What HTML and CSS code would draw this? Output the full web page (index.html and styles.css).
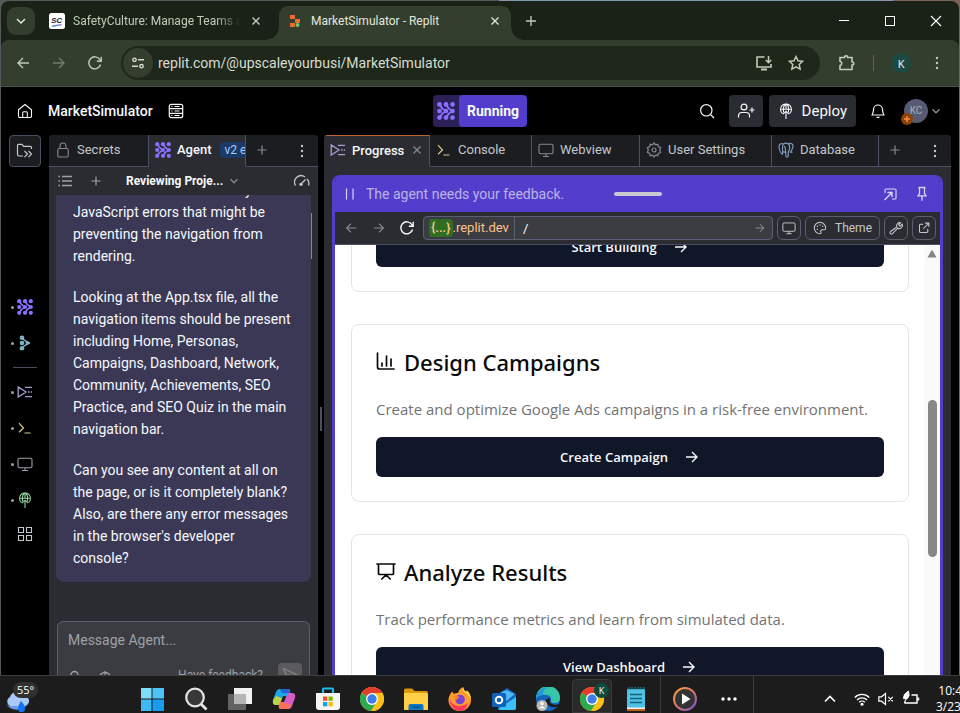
FILE: index.html
```html
<!DOCTYPE html>
<html lang="en">
<head>
<meta charset="utf-8">
<title>MarketSimulator - Replit</title>
<link rel="stylesheet" href="styles.css">
</head>
<body>
<svg class="defs" aria-hidden="true">
  <symbol id="agent" viewBox="0 0 16 16"><g fill="currentColor"><circle cx="2.2" cy="2.2" r="2.100"/><circle cx="8" cy="2.2" r="2.100"/><circle cx="13.8" cy="2.2" r="2.100"/><circle cx="2.2" cy="8" r="2.100"/><circle cx="8" cy="8" r="2.100"/><circle cx="13.8" cy="8" r="2.100"/><circle cx="2.2" cy="13.8" r="2.100"/><circle cx="8" cy="13.8" r="2.100"/><circle cx="13.8" cy="13.8" r="2.100"/></g><path d="M2.200 2.200Q4 6 8 8Q4 10 2.200 13.800M8 2.200Q9.800 6 13.800 8Q9.800 10 8 13.800" fill="none" stroke="currentColor" stroke-width="1.700"/></symbol>
  <symbol id="plus" viewBox="0 0 16 16"><path d="M8 3.500v9M3.500 8h9" fill="none" stroke="currentColor" stroke-width="1.200"/></symbol>
  <symbol id="dots" viewBox="0 0 16 16"><g fill="currentColor"><circle cx="8" cy="3" r="1.200"/><circle cx="8" cy="8" r="1.200"/><circle cx="8" cy="13" r="1.200"/></g></symbol>
  <symbol id="close" viewBox="0 0 16 16"><path d="M4 4l8 8M12 4l-8 8" fill="none" stroke="currentColor" stroke-width="1.500"/></symbol>
  <symbol id="down" viewBox="0 0 16 16"><path d="M4 6l4 4 4-4" fill="none" stroke="currentColor" stroke-width="1.500"/></symbol>
  <symbol id="left" viewBox="0 0 16 16"><path d="M14 8H3M8 3L3 8l5 5" fill="none" stroke="currentColor" stroke-width="1.400"/></symbol>
  <symbol id="right" viewBox="0 0 16 16"><path d="M2 8h11M8 3l5 5-5 5" fill="none" stroke="currentColor" stroke-width="1.400"/></symbol>
  <symbol id="reload" viewBox="0 0 16 16"><path d="M13.600 9.500A6 6 0 1 1 12.900 4.600L14 6M14.200 1.800V6.200H9.800" fill="none" stroke="currentColor" stroke-width="1.400"/></symbol>
  <symbol id="monitor" viewBox="0 0 16 16"><rect x="1" y="2.200" width="14" height="9.600" rx="1.500" fill="none" stroke="currentColor" stroke-width="1.100"/><path d="M8 12v2.400M5 14.500h6" stroke="currentColor" stroke-width="1.100"/></symbol>
  <symbol id="flow" viewBox="0 0 16 16"><path d="M1.200 3v10L9 8zM8 3.300h7M11 8h1.600M13.800 8H15M8 12.700h7" fill="none" stroke="currentColor" stroke-width="1.300"/></symbol>
  <symbol id="prompt" viewBox="0 0 16 16"><path d="M2 3.200L6.500 8 2 12.200M7.500 13h6" fill="none" stroke="currentColor" stroke-width="1.200"/></symbol>
  <symbol id="deploy" viewBox="0 0 16 16"><path d="M4.500 10.600A5.500 5.500 0 1 1 11.500 10.600M2.700 6.200h10.600M5.600 9.300C4.900 5 6 2 8 .8 10 2 11.100 5 10.400 9.300M8 16V8.200M5 11.200L8 8.200l3 3M8 .8V6" fill="none" stroke="currentColor" stroke-width="1.100"/></symbol>
  <symbol id="chrome" viewBox="0 0 24 24"><circle cx="12" cy="12" r="12" fill="#fbc116"/><path d="M12 12L1.600 6A12 12 0 0 1 22.400 6z" fill="#e33b2e"/><path d="M12 12L1.600 6A12 12 0 0 0 11 24l5.500-9.500z" fill="#2da94f"/><path d="M12 6h10.400A12 12 0 0 1 12 24l5-9z" fill="#fbc116"/><circle cx="12" cy="12" r="6" fill="#fff"/><circle cx="12" cy="12" r="4.700" fill="#3d7ee8"/></symbol>
</svg>

<div class="window">
  <header class="tabstrip">
    <button class="tab-search" aria-label="Search tabs"><svg class="i16"><use href="#down"/></svg></button>
    <div class="btab">
      <svg class="i16" viewBox="0 0 16 16"><rect width="16" height="16" rx="2.500" fill="#fff"/><text x="2" y="10" class="sc-mark">SC</text><path d="M3.500 13.200l9-1.600" stroke="#6a6df0" stroke-width="1.200"/><path d="M3 13.500l3.500-.6" stroke="#2fb7d8" stroke-width="1"/></svg>
      <span class="btab-title fade">SafetyCulture: Manage Teams and</span>
      <button aria-label="Close tab"><svg class="i14"><use href="#close"/></svg></button>
    </div>
    <div class="btab active">
      <svg class="i16" viewBox="0 0 16 16"><path d="M3 2h5v4H3zM8 6h5v4H8zM3 10h5v4H3z" fill="#ed6b2d"/><circle cx="10.500" cy="12" r="2" fill="#5ecf6a"/></svg>
      <span class="btab-title">MarketSimulator - Replit</span>
      <button aria-label="Close tab"><svg class="i14"><use href="#close"/></svg></button>
    </div>
    <button class="newtab" aria-label="New tab"><svg class="i18"><use href="#plus"/></svg></button>
    <div class="winctl">
      <button aria-label="Minimize"><svg class="i12" viewBox="0 0 12 12"><path d="M1 5.500h10" stroke="#fff"/></svg></button>
      <button aria-label="Maximize"><svg class="i12" viewBox="0 0 12 12"><rect x="1.500" y="1.500" width="9" height="9" fill="none" stroke="#fff"/></svg></button>
      <button aria-label="Close"><svg class="i12" viewBox="0 0 12 12"><path d="M1 1l10 10M11 1L1 11" stroke="#fff" stroke-width="1.200"/></svg></button>
    </div>
  </header>

  <nav class="toolbar">
    <button aria-label="Back"><svg class="i16"><use href="#left"/></svg></button>
    <button class="dim" aria-label="Forward"><svg class="i16"><use href="#right"/></svg></button>
    <button aria-label="Reload"><svg class="i16"><use href="#reload"/></svg></button>
    <div class="omnibox">
      <button class="site" aria-label="Site information"><svg class="i14" viewBox="0 0 14 14"><g fill="none" stroke="currentColor" stroke-width="1.400"><circle cx="3.500" cy="3.800" r="1.700"/><path d="M7 3.800h6M1 10.200h6"/><circle cx="10.500" cy="10.200" r="1.700"/></g></svg></button>
      <input type="text" aria-label="Address" value="replit.com/@upscaleyourbusi/MarketSimulator">
      <button aria-label="Install app"><svg class="i18" viewBox="0 0 18 18"><path d="M9.500 3H2v10h14v-3" fill="none" stroke="currentColor" stroke-width="1.600"/><path d="M6 15.500h6" stroke="currentColor" stroke-width="2"/><path d="M13.500 2v6.500M10.800 6l2.700 2.700L16.200 6" fill="none" stroke="currentColor" stroke-width="1.500"/></svg></button>
      <button aria-label="Bookmark"><svg class="i16" viewBox="0 0 16 16"><path d="M8 1.500l2 4.300 4.700.5-3.500 3.200 1 4.600L8 11.800l-4.200 2.300 1-4.600L1.300 6.300 6 5.800z" fill="none" stroke="currentColor" stroke-width="1.400"/></svg></button>
    </div>
    <button aria-label="Extensions"><svg class="i18" viewBox="0 0 18 18"><path d="M2 3.500h4.500a1.600 1.600 0 0 1 3.200 0H14v4.200a1.700 1.700 0 0 1 0 3.400V15.500H2v-4a2.200 2.200 0 0 0 0-4.300z" fill="none" stroke="currentColor" stroke-width="1.600"/></svg></button>
    <span class="tb-sep"></span>
    <button class="profile" aria-label="Profile">K</button>
    <button class="menu" aria-label="Menu"><svg class="i16"><use href="#dots"/></svg></button>
  </nav>

  <div class="app-head">
    <div class="head-side">
      <a href="#" aria-label="Home"><svg class="i16" viewBox="0 0 16 16"><path d="M1.500 6.800L8 1.500l6.500 5.300v6.400a1.300 1.300 0 0 1-1.300 1.300H2.800a1.300 1.300 0 0 1-1.300-1.300zM5.700 14.500V9.800a1 1 0 0 1 1-1h2.600a1 1 0 0 1 1 1v4.700" fill="none" stroke="currentColor" stroke-width="1.100"/></svg></a>
      <a class="project" href="#">MarketSimulator</a>
      <button aria-label="Files"><svg class="i16" viewBox="0 0 16 16"><g fill="none" stroke="currentColor" stroke-width="1.200"><rect x="1.300" y="1.300" width="13.400" height="13.400" rx="2"/><path d="M1.300 5.700h13.400M1.300 10.300h13.400"/><path d="M3.300 3.500h1.200M6.500 3.500h5M3.300 8h1.200M6.500 8h5M3.300 12.500h1.200M6.500 12.500h5" stroke-width="1"/></g></svg></button>
    </div>
    <button class="run"><span class="run-icon"><svg class="i18"><use href="#agent"/></svg></span><span class="run-label">Running</span></button>
    <div class="head-side end">
      <button class="plain" aria-label="Search"><svg class="i16" viewBox="0 0 16 16"><circle cx="7.300" cy="7.300" r="5.700" fill="none" stroke="currentColor" stroke-width="1.200"/><path d="M11.500 11.500L15 15" stroke="currentColor" stroke-width="1.200"/></svg></button>
      <button class="box" aria-label="Invite"><svg class="i18" viewBox="0 0 18 18"><g fill="none" stroke="currentColor" stroke-width="1.200"><circle cx="7" cy="5" r="2.900"/><path d="M1.500 15.500v-2a3 3 0 0 1 3-3h5a3 3 0 0 1 3 3v2M15 5.500v5M12.500 8h5"/></g></svg></button>
      <button class="box deploy"><svg class="i16"><use href="#deploy"/></svg>Deploy</button>
      <button class="plain" aria-label="Notifications"><svg class="i16" viewBox="0 0 16 16"><path d="M3.500 6.500a4.500 4.500 0 0 1 9 0c0 4 1.500 5 1.500 5.500H2c0-.5 1.500-1.500 1.500-5.500zM6.500 14.300h3" fill="none" stroke="currentColor" stroke-width="1.200"/></svg></button>
      <button class="account" aria-label="Account"><span class="avatar">KC<svg class="badge" viewBox="0 0 12 12"><circle cx="6" cy="6" r="6" fill="#8a4208"/><path d="M6 3v6M3 6h6" stroke="#ff8a3a" stroke-width="1.500"/></svg></span><svg class="i14"><use href="#down"/></svg></button>
    </div>
  </div>

  <main class="work">
    <aside class="rail">
      <button class="folder" aria-label="Open files"><svg class="i18" viewBox="0 0 18 18"><path d="M7 14H3.200A1.700 1.700 0 0 1 1.500 12.300V3.500A1.200 1.200 0 0 1 2.700 2.300H6l1.600 2H14A1.500 1.500 0 0 1 15.500 5.800V7M8.500 9l3 3-3 3.200M12.500 9l3 3-3 3.200" fill="none" stroke="currentColor" stroke-width="1.200"/></svg></button>
      <button class="dot violet first" aria-label="Agent"><svg class="i16"><use href="#agent"/></svg></button>
      <button class="dot teal" aria-label="Assistant"><svg class="i16" viewBox="0 0 16 16"><g fill="currentColor"><circle cx="5" cy="2.700" r="2.300"/><circle cx="5" cy="8" r="2.300"/><circle cx="5" cy="13.300" r="2.300"/><path d="M5 1.500Q7 5 13 7.200V8.800Q7 11 5 14.500L6 11q3-1.500 3-3T6 5z"/></g></svg></button>
      <hr>
      <button class="dot lilac" aria-label="Progress"><svg class="i16"><use href="#flow"/></svg></button>
      <button class="dot sand" aria-label="Console"><svg class="i16"><use href="#prompt"/></svg></button>
      <button class="dot gray" aria-label="Webview"><svg class="i16"><use href="#monitor"/></svg></button>
      <button class="dot green" aria-label="Deployments"><svg class="i16"><use href="#deploy"/></svg></button>
      <button class="all" aria-label="All tools"><svg class="i16" viewBox="0 0 16 16"><path d="M1.500 1.500h5v5h-5zM9.500 1.500h5v5h-5zM1.500 9.500h5v5h-5zM9.500 9.500h5v5h-5z" fill="none" stroke="currentColor" stroke-width="1.100"/></svg></button>
    </aside>

    <section class="pane chat">
      <div class="tabs">
        <button class="tab secrets"><svg class="i16" viewBox="0 0 16 16"><rect x="2.800" y="6.500" width="10.400" height="8.500" rx="1.500" fill="none" stroke="currentColor" stroke-width="1.100"/><path d="M5 6.500V4a3 3 0 0 1 6 0v2.500" fill="none" stroke="currentColor" stroke-width="1.100"/></svg>Secrets</button>
        <button class="tab on agent-tab"><svg class="i16 violet"><use href="#agent"/></svg>Agent<span class="ver">v2 early</span></button>
        <button class="tab add" aria-label="New tab"><svg class="i16"><use href="#plus"/></svg></button>
        <button class="more" aria-label="Pane menu"><svg class="i16"><use href="#dots"/></svg></button>
      </div>
      <div class="chat-head">
        <button aria-label="History"><svg class="i16" viewBox="0 0 16 16"><path d="M5 3.500h10M5 8h10M5 12.500h10" stroke="currentColor" stroke-width="1.600"/><path d="M1.500 3.500h1.500M1.500 8h1.500M1.500 12.500h1.500" stroke="currentColor" stroke-width="1.400"/></svg></button>
        <button aria-label="New chat"><svg class="i16"><use href="#plus"/></svg></button>
        <button class="chat-name">Reviewing Proje...<svg class="i14"><use href="#down"/></svg></button>
        <button class="gauge" aria-label="Usage"><svg class="i16" viewBox="0 0 16 16"><path d="M1.500 12.500A6.500 6.500 0 0 1 11 4M13 6A6.500 6.500 0 0 1 14.500 12.500M7 11l4.500-4.500" fill="none" stroke="currentColor" stroke-width="1.300"/><circle cx="7" cy="11.300" r="1.600" fill="currentColor"/></svg></button>
      </div>
      <div class="log">
        <article class="msg">
          <p>Let me check if there are any JavaScript errors that might be preventing the navigation from rendering.</p>
          <p>Looking at the App.tsx file, all the navigation items should be present including Home, Personas, Campaigns, Dashboard, Network, Community, Achievements, SEO Practice, and SEO Quiz in the main navigation bar.</p>
          <p>Can you see any content at all on the page, or is it completely blank? Also, are there any error messages in the browser's developer console?</p>
        </article>
        <span class="thumb"></span>
      </div>
      <div class="composer-clip">
        <form class="composer">
          <textarea aria-label="Message Agent" rows="1" placeholder="Message Agent..."></textarea>
          <div class="composer-row">
            <button type="button" aria-label="Attach"><svg class="i16" viewBox="0 0 16 16"><path d="M3 9V5a3.500 3.500 0 0 1 7 0v5a2 2 0 0 1-4 0V5.500M12.500 5v5" fill="none" stroke="currentColor" stroke-width="1.300"/></svg></button>
            <button type="button" aria-label="Capture"><svg class="i16" viewBox="0 0 16 16"><circle cx="8" cy="8" r="5.500" fill="none" stroke="currentColor" stroke-width="1.400"/><path d="M8 1v5M4.500 8h7" stroke="currentColor" stroke-width="1.200"/></svg></button>
            <a href="#">Have feedback?</a>
            <button type="button" class="send" aria-label="Send"><svg class="i16" viewBox="0 0 16 16"><path d="M1.500 1.500L15 8 1.500 14.500 4 8zM4 8h5" fill="none" stroke="currentColor" stroke-width="1.200"/></svg></button>
          </div>
        </form>
      </div>
    </section>

    <div class="splitter"><span></span></div>

    <section class="pane">
      <div class="tabs">
        <button class="tab on progress"><svg class="i16 lilac"><use href="#flow"/></svg>Progress<svg class="i14"><use href="#close"/></svg></button>
        <button class="tab t-console"><svg class="i16 sand"><use href="#prompt"/></svg>Console</button>
        <button class="tab t-web"><svg class="i16"><use href="#monitor"/></svg>Webview</button>
        <button class="tab t-user"><svg class="i16" viewBox="0 0 16 16"><g fill="none" stroke="currentColor" stroke-width="1.200"><path d="M8 1l1.500 1.800 2.300-.5.500 2.300 2.300 1L13.700 8l.9 2.400-2.300 1-.5 2.300-2.300-.5L8 15l-1.500-1.800-2.300.5-.5-2.300-2.300-1L2.300 8l-.9-2.400 2.300-1 .5-2.300 2.300.5z"/><circle cx="8" cy="8" r="2"/></g></svg>User Settings</button>
        <button class="tab t-data"><svg class="i16 blue" viewBox="0 0 16 16"><path d="M4.500 12.500C2.500 11 1 7 1 4.500 1 2 3 1 5.500 2 7 1 9 1 10.500 2 13 .7 15.300 2 15 4.500c-.3 2.500-1.500 4-2.500 5.500l2 .3M5.500 2C4 4 4.500 7 4.700 9.500L4.500 12.500M10.500 2c1.700 2 1.500 6-.2 8V14c-.3 1.500-2.300 1.500-2.500 0V10M4.700 9.500c1 .6 2.300.6 3-.2M7.700 9.500C7.300 7.500 7.500 5 6.200 4" fill="none" stroke="currentColor" stroke-width="1.200"/></svg>Database</button>
        <button class="tab add" aria-label="New tab"><svg class="i16"><use href="#plus"/></svg></button>
        <button class="more" aria-label="Pane menu"><svg class="i16"><use href="#dots"/></svg></button>
      </div>
      <div class="preview">
        <div class="notice">
          <svg class="i16" viewBox="0 0 16 16"><path d="M4.500 2.500v11M11 2.500v11" stroke="currentColor" stroke-width="1.200"/></svg>
          <span>The agent needs your feedback.</span>
          <i class="grip"></i>
          <button aria-label="Pop out"><svg class="i16" viewBox="0 0 16 16"><path d="M3 7V4.500A1.500 1.500 0 0 1 4.500 3h8A1.500 1.500 0 0 1 14 4.500v7a1.500 1.500 0 0 1-1.500 1.500H10" fill="none" stroke="currentColor" stroke-width="1.600" opacity=".7"/><path d="M2.500 14l7.500-7.500M5.500 6.500H10V11" fill="none" stroke="currentColor" stroke-width="1.400"/></svg></button>
          <button aria-label="Pin"><svg class="i16" viewBox="0 0 16 16"><path d="M4.500 1.500h7M5.500 1.500v6L4 9.800h8l-1.500-2.300v-6M8 9.800v5" fill="none" stroke="currentColor" stroke-width="1.300"/></svg></button>
        </div>
        <div class="webbar">
          <button class="nav" aria-label="Back"><svg class="i14"><use href="#left"/></svg></button>
          <button class="nav" aria-label="Forward"><svg class="i14"><use href="#right"/></svg></button>
          <button class="nav lit" aria-label="Reload"><svg class="i16"><use href="#reload"/></svg></button>
          <div class="addr">
            <span class="host"><b>{...}</b>.replit.dev</span>
            <input type="text" aria-label="Path" value="/">
            <svg class="i12"><use href="#right"/></svg>
          </div>
          <button class="sq" aria-label="Device size"><svg class="i14"><use href="#monitor"/></svg></button>
          <button class="sq theme"><svg class="i14" viewBox="0 0 16 16"><path d="M8 1.500a6.500 6.500 0 1 0 0 13c1 0 1.500-.8 1-1.800-.6-1.300 0-2.700 1.500-2.700h2c1.300 0 2-.8 2-2C14.500 4.500 11.500 1.500 8 1.500z" fill="none" stroke="currentColor" stroke-width="1.200"/><g fill="currentColor"><circle cx="5" cy="6" r=".8"/><circle cx="8" cy="4.500" r=".8"/><circle cx="11" cy="6" r=".8"/><circle cx="5" cy="9.500" r=".8"/></g></svg>Theme</button>
          <button class="sq" aria-label="Developer tools"><svg class="i14" viewBox="0 0 16 16"><path d="M9 6.800A3.600 3.600 0 0 1 13.200 2L11 4.200l.8.9.9.8L15 3.500A3.600 3.600 0 0 1 10 8.200L4 14.300a1.600 1.600 0 0 1-2.300-2.300z" fill="none" stroke="currentColor" stroke-width="1.200"/></svg></button>
          <button class="sq" aria-label="Open in new tab"><svg class="i12" viewBox="0 0 16 16"><path d="M7 3H3.500A1.500 1.500 0 0 0 2 4.500v8A1.500 1.500 0 0 0 3.500 14h8a1.500 1.500 0 0 0 1.500-1.500V9M9.500 1.500h5v5M14.500 1.500L7 9" fill="none" stroke="currentColor" stroke-width="1.400"/></svg></button>
        </div>
        <div class="site-view">
          <div class="cards">
            <article class="card">
              <h2>Build Personas</h2>
              <p>Create detailed customer personas.</p>
              <a class="cta" href="#">Start Building<svg class="i16"><use href="#right"/></svg></a>
            </article>
            <article class="card">
              <h2><svg class="i20" viewBox="0 0 20 20"><path d="M1.500 1v14a2 2 0 0 0 2 2H18M6 14v-3M10.500 14V4M15 14V7" fill="none" stroke="currentColor" stroke-width="1.700" stroke-linecap="round"/></svg>Design Campaigns</h2>
              <p>Create and optimize Google Ads campaigns in a risk-free environment.</p>
              <a class="cta" href="#">Create Campaign<svg class="i16"><use href="#right"/></svg></a>
            </article>
            <article class="card">
              <h2><svg class="i20" viewBox="0 0 20 20"><path d="M1 2h18M2.500 2v9.500a1 1 0 0 0 1 1h13a1 1 0 0 0 1-1V2M5.800 17l4.200-4 4.200 4" fill="none" stroke="currentColor" stroke-width="1.700" stroke-linecap="round"/></svg>Analyze Results</h2>
              <p>Track performance metrics and learn from simulated data.</p>
              <a class="cta" href="#">View Dashboard<svg class="i16"><use href="#right"/></svg></a>
            </article>
          </div>
          <div class="scroll"><svg class="i12" viewBox="0 0 12 12"><path d="M1.500 9.500h9L6.800 2.800a1 1 0 0 0-1.600 0z" fill="#878787"/></svg><span></span></div>
        </div>
      </div>
    </section>
  </main>
</div>

<footer class="taskbar">
  <button class="weather" aria-label="Weather"><svg class="i26" viewBox="0 0 26 26"><path d="M6 20a5 5 0 0 1 0-9 7 7 0 0 1 13-1 5 5 0 0 1 2 10z" fill="#a9c8f5"/><path d="M2 16a8 6 0 0 0 22-1 4.500 4.500 0 0 1-4 5H6a4.500 4.500 0 0 1-4-4z" fill="#6c9ae8"/><path d="M14 23q0-4 3-8 4 4 4 7.500a3.500 3.500 0 0 1-7 .5z" fill="#1473f0"/></svg><span class="temp">55°</span></button>
  <div class="apps">
    <button aria-label="Start"><svg class="i24" viewBox="0 0 24 24"><path d="M1 1h10.500v10.500H1z" fill="#7fdcfb"/><path d="M12.500 1H24v10.500H12.500z" fill="#4dc4f5"/><path d="M1 12.500h10.500V24H1z" fill="#3fb9f3"/><path d="M12.500 12.500H24V24H12.500z" fill="#189cf0"/></svg></button>
    <button aria-label="Search"><svg class="i24" viewBox="0 0 24 24"><circle cx="11" cy="10.500" r="8.800" fill="#383838" stroke="#e3e3e3" stroke-width="2.200"/><path d="M17 17l5.500 5.500" stroke="#e3e3e3" stroke-width="2.800"/></svg></button>
    <button aria-label="Task view"><svg class="i24" viewBox="0 0 24 24"><rect x="6" y="1" width="18" height="16" fill="#f1f1f1"/><rect y="7" width="18" height="16" fill="#666" opacity=".95"/><rect x="6" y="7" width="12" height="10" fill="#b5b5b5"/></svg></button>
    <button aria-label="Copilot"><svg class="i24" viewBox="0 0 24 24"><path d="M8 2h8q3 0 2 4l-2 4-3 0-4 8H4q-4 0-3-5L4 5q1-3 4-3z" fill="#1aa7e8"/><path d="M1 13l3-4 6 2-2 7H4q-4 0-3-5z" fill="#b7d544"/><path d="M8 2h8q3 0 2 4h-8z" fill="#2562d4"/><path d="M16 22H9q-3 0-2-4l2-4 3 0 4-8h4q4 0 3 5l-3 8q-1 3-4 3z" fill="#d45cc4"/><path d="M16 22H9q-3 0-2-4l2-4 10 4q-1 4-3 4z" fill="#fa6e5c"/><path d="M11 9h3l-2 6H9z" fill="#222"/></svg></button>
    <button aria-label="Store"><svg class="i24" viewBox="0 0 24 24"><path d="M7 6V2.500q0-1 1-1h8q1 0 1 1V6" fill="none" stroke="#22b8ed" stroke-width="2.200"/><path d="M0 6h24v14q0 3-3 3H3q-3 0-3-3z" fill="#f5f5f5"/><path d="M7 9.500h4.300v4.300H7z" fill="#f25022"/><path d="M12.500 9.500h4.300v4.300h-4.300z" fill="#7fba00"/><path d="M7 15h4.300v4.300H7z" fill="#00a4ef"/><path d="M12.500 15h4.300v4.300h-4.300z" fill="#ffb900"/></svg></button>
    <button aria-label="Chrome"><svg class="i24"><use href="#chrome"/></svg></button>
    <button aria-label="File Explorer"><svg class="i24" viewBox="0 0 24 24"><path d="M0 3q0-1.500 1.500-1.500H8L10.500 4H22q2 0 2 2v2H0z" fill="#dd9a0a"/><path d="M0 6h22q2 0 2 2v15H0z" fill="#ffcf48"/><path d="M4.500 23v-4q0-2 2-2h11q2 0 2 2v4z" fill="#0c74c4"/><path d="M8 20h8" stroke="#0a4c86" stroke-width="1.200"/></svg></button>
    <button aria-label="Firefox"><svg class="i24" viewBox="0 0 24 24"><path d="M12 24A11 11 0 0 1 2 7.500L4 4.500 6 7q2-1.500 4-1 1-4 5-6 .5 3 3 5l1-1.500q4 4 4 9.500a11 11 0 0 1-11 11z" fill="#ff9a2c"/><path d="M15 0q.5 3 3 5l1-1.500q4 4 4 9.500-2-6-6-7.500-3-2-2-5.500z" fill="#ffe14a"/><path d="M1.200 11q1 5 6 7.500T20 16q-2 7-8 8Q2 23 1.200 11z" fill="#ff3660"/><circle cx="12" cy="12.500" r="4.800" fill="#7a43d8"/><path d="M5 9q4-1 7 1.500-3 .5-4 3-2-1-3-4.500z" fill="#ff8a23"/></svg></button>
    <button aria-label="Outlook"><svg class="i24" viewBox="0 0 24 24"><path d="M6 7l9-6 9 6v14q0 2-2 2H8q-2 0-2-2z" fill="#1568c4"/><path d="M7 6.500L14.500 3l8 4-8 7z" fill="#50b9f5"/><path d="M6 22l18-12v11q0 2-2 2H8z" fill="#3bc1f5"/><rect y="6" width="14" height="14" rx="1.500" fill="#0f62b8"/><circle cx="7" cy="13" r="3.300" fill="none" stroke="#fff" stroke-width="1.900"/></svg></button>
    <button aria-label="Edge"><svg class="i24" viewBox="0 0 24 24"><circle cx="12" cy="12" r="12" fill="#1766bd"/><path d="M0 11A12 12 0 0 1 24 11q0 5-5 5-4 0-4-2 1-5-4-6Q4 7 0 11z" fill="#36c5a8"/><path d="M0 11A12 12 0 0 1 12 0Q6 3 7 8q-4 0-7 3z" fill="#2396dc"/><path d="M14 11q-2 9 10 6l-1 2q-8 3-12-2t3-6z" fill="#1c1c1c"/><circle cx="6" cy="18.500" r="5.500" fill="#b7b7b7"/><circle cx="6" cy="16.500" r="1.800" fill="#f5f5f5"/><path d="M2.700 21.500q3.300-5 6.600 0z" fill="#f5f5f5"/></svg></button>
    <button class="current" aria-label="Chrome, profile K"><svg class="i24"><use href="#chrome"/></svg><span class="kbadge">K</span></button>
    <button aria-label="Notepad"><svg class="i24" viewBox="0 0 24 24"><path d="M3 2h18v20H3z" fill="#4fc1e2"/><path d="M3 22h18v2H3z" fill="#c26317"/><path d="M3 20.500h18V22H3z" fill="#f5f5f5"/><path d="M6 7.500h12M6 11.500h12M6 15.500h12" stroke="#14607f" stroke-width="1.600"/><path d="M5 0v3M8 0v3M11 0v3M14 0v3M17 0v3M20 0v3" stroke="#1c7f9f" stroke-width="1.200"/></svg></button>
  </div>
  <div class="extra">
    <button aria-label="Media player"><svg class="i24" viewBox="0 0 24 24"><defs><linearGradient id="ring" x2="1" y2="1"><stop stop-color="#f9a13c"/><stop offset=".5" stop-color="#d9716a"/><stop offset="1" stop-color="#7657d8"/></linearGradient></defs><circle cx="12" cy="12" r="11" fill="#333" stroke="url(#ring)" stroke-width="2"/><path d="M9 6.500v11l8.500-5.500z" fill="#fff"/></svg></button>
    <button aria-label="More apps"><svg class="i18" viewBox="0 0 18 18"><g fill="#fff"><circle cx="3" cy="9" r="1.700"/><circle cx="9" cy="9" r="1.700"/><circle cx="15" cy="9" r="1.700"/></g></svg></button>
  </div>
  <div class="tray">
    <button aria-label="Hidden icons"><svg class="i16" viewBox="0 0 16 16"><path d="M3 10.500L8 5.500l5 5" fill="none" stroke="currentColor" stroke-width="1.600"/></svg></button>
    <button aria-label="Network"><svg class="i16" viewBox="0 0 16 16"><g fill="none" stroke="currentColor" stroke-width="1.300"><path d="M.8 6.500a10 10 0 0 1 14.400 0M3 9a7 7 0 0 1 10 0M5.200 11.300a4 4 0 0 1 5.600 0"/></g><circle cx="8" cy="13.300" r="1.500" fill="currentColor"/></svg></button>
    <button aria-label="Volume muted"><svg class="i16" viewBox="0 0 16 16"><path d="M.8 5.800h2.700L7.500 2.500v11L3.500 10.200H.8zM10.300 5.800l4.500 4.500M14.800 5.800l-4.500 4.500" fill="none" stroke="currentColor" stroke-width="1.200"/></svg></button>
    <button aria-label="Battery"><svg class="i18" viewBox="0 0 18 18"><path d="M9.500 5H15v8H3v-1.500M16.500 7.500v3" fill="none" stroke="currentColor" stroke-width="1.400"/><path d="M1.500 8.500Q1 4 6.500 1q2 5-1.500 8zM2.500 12.500l2.500-6" fill="currentColor" stroke="currentColor"/></svg></button>
    <div class="clock"><span>10:43 AM</span><span>3/23/2025</span></div>
  </div>
</footer>
</body>
</html>
```
FILE: styles.css
```css
* { box-sizing: border-box; }

body {
  margin: 0;
  height: 100vh;
  display: flex;
  flex-direction: column;
  overflow: hidden;
  background: linear-gradient(90deg, #56585a 52%, #8797ab 52%, #8797ab 93%, #7c6357 93%);
  font-family: Roboto, "Liberation Sans", sans-serif;
  font-size: 14px;
  color: #f5f9fc;
}

button, input, textarea {
  font: inherit;
  color: inherit;
  background: none;
  border: 0;
  padding: 0;
  margin: 0;
  outline: 0;
}

button {
  display: flex;
  align-items: center;
  justify-content: center;
  flex: none;
  white-space: nowrap;
}

a { color: inherit; text-decoration: none; }
h2, p { margin: 0; }
svg { flex: none; display: block; }
.defs { display: none; }
.i12 { width: 12px; height: 12px; }
.i14 { width: 14px; height: 14px; }
.i16 { width: 16px; height: 16px; }
.i18 { width: 18px; height: 18px; }
.i20 { width: 20px; height: 20px; }
.i24 { width: 24px; height: 24px; }
.i26 { width: 26px; height: 26px; }

.violet { color: #8a70ff; }
.teal { color: #7db4c4; }
.lilac { color: #a89bd0; }
.sand { color: #d9c98a; }
.gray { color: #9aa0a6; }
.green { color: #8fd19e; }
.blue { color: #7f9bc0; }

.window {
  flex: 1;
  min-height: 0;
  margin: 1px 1px 0;
  display: flex;
  flex-direction: column;
  background: #1a2217;
  border-radius: 8px 8px 0 0;
  overflow: hidden;
}

/* Browser chrome */
.tabstrip {
  height: 39px;
  flex: none;
  display: flex;
  align-items: center;
  padding-left: 6px;
  font-size: 12px;
  color: #c0cdb8;
}

.tab-search {
  width: 28px;
  height: 28px;
  border-radius: 9px;
  background: #343e2f;
  color: #e1e8dc;
}

.btab {
  display: flex;
  align-items: center;
  gap: 8px;
  width: 232px;
  padding: 0 4px 0 14px;
}

.btab.active {
  position: relative;
  align-self: flex-end;
  height: 34px;
  margin-left: 12px;
  padding: 0 9px 4px 8px;
  border-radius: 9px 9px 0 0;
  background: #343e2f;
  color: #e1e8dc;
}

.btab.active::before,
.btab.active::after {
  content: "";
  position: absolute;
  bottom: 0;
  width: 12px;
  height: 12px;
}

.btab.active::before {
  right: 100%;
  background: radial-gradient(circle at 0 0, transparent 11px, #343e2f 12px);
}

.btab.active::after {
  left: 100%;
  background: radial-gradient(circle at 100% 0, transparent 11px, #343e2f 12px);
}

.btab-title {
  flex: 1;
  overflow: hidden;
  white-space: nowrap;
}

.fade { mask-image: linear-gradient(90deg, #000 85%, transparent); }
.sc-mark { font: italic bold 8px "Liberation Sans", sans-serif; fill: #151a33; }
.newtab { margin-left: 11px; }
.winctl { margin-left: auto; display: flex; }
.winctl button { width: 46px; height: 38px; }

.toolbar {
  height: 47px;
  flex: none;
  display: flex;
  align-items: center;
  padding-left: 14px;
  border-radius: 8px 8px 0 0;
  border-bottom: 1px solid #4a5345;
  background: #343e2f;
  color: #c0cdb8;
}

.toolbar > button { width: 16px; margin-right: 20px; }
.toolbar > .dim { color: #727b6c; }

.omnibox {
  flex: 1;
  height: 34px;
  display: flex;
  align-items: center;
  gap: 15px;
  margin: 0 19px 0 -2px;
  padding: 0 16px 0 2px;
  border-radius: 17px;
  background: #1f271b;
}

.omnibox input {
  flex: 1;
  min-width: 0;
  margin-left: -10px;
  color: #d5dccf;
}

.site {
  width: 30px;
  height: 30px;
  border-radius: 15px;
  background: #343e2f;
  color: #d5dccf;
}

.tb-sep { width: 1px; height: 16px; margin: 0 17px 0 -2px; background: #5a6452; }

.toolbar > .profile {
  width: 20px;
  height: 20px;
  margin-right: 18px;
  border-radius: 10px;
  background: #1d4a40;
  font: 11px "Open Sans", sans-serif;
  color: #fff;
}

.toolbar > .menu { margin-right: 14px; }

/* Replit header */
.app-head {
  height: 48px;
  flex: none;
  display: flex;
  align-items: center;
  background: #000;
  padding: 0 16px;
}

.head-side { flex: 1; display: flex; align-items: center; gap: 15px; }
.head-side.end { justify-content: flex-end; gap: 6px; }
.project { font-weight: 500; }

.run {
  height: 32px;
  border-radius: 4px;
  overflow: hidden;
  background: #2b2058;
  font-weight: 700;
}

.run-icon { padding: 0 4px; color: #8a70ff; }

.run-label {
  padding: 0 8px;
  line-height: 32px;
  border-radius: 4px;
  background: #533dcc;
}

.box { height: 32px; padding: 0 8px; border-radius: 4px; background: #2a2c33; }
.deploy { gap: 8px; padding: 0 9px; font-size: 15px; }
.plain { width: 32px; height: 32px; }
.account { gap: 1px; color: #8a8f98; margin-left: 4px; }

.avatar {
  position: relative;
  width: 24px;
  height: 24px;
  border-radius: 12px;
  background: #575a72;
  font-size: 10px;
  line-height: 24px;
  color: #a9adba;
}

.badge {
  position: absolute;
  left: -3px;
  bottom: -2px;
  width: 12px;
  height: 12px;
}

/* Workspace */
.work { flex: 1; min-height: 0; display: flex; background: #000; padding-right: 8px; }

.rail {
  width: 48px;
  flex: none;
  display: flex;
  flex-direction: column;
  align-items: center;
}

.rail button { position: relative; width: 32px; height: 36px; }

.rail .folder {
  height: 32px;
  border: 1px solid #4a5064;
  border-radius: 4px;
  background: #1c1d21;
  color: #c2c8cc;
}

.rail .first { margin-top: 122px; }
.rail .all { height: 32px; color: #c2c8cc; }

.rail .dot::before {
  content: "";
  position: absolute;
  left: 2px;
  width: 3px;
  height: 3px;
  border-radius: 2px;
  background: #9a9fa6;
}

.rail hr { width: 24px; height: 1px; margin: 6px 0; border: 0; background: #4a4e5a; }

.pane {
  flex: 1;
  min-width: 0;
  display: flex;
  flex-direction: column;
  border-radius: 4px 4px 0 0;
  overflow: hidden;
  background: #2b2c31;
}

.chat { flex: 0 0 269px; }

.tabs { height: 32px; flex: none; display: flex; background: #1c1d21; color: #c2c8cc; font-size: 13px; }

.tab {
  gap: 6px;
  justify-content: flex-start;
  padding: 0 6px 2px;
  border-right: 1px solid #4a5064;
  border-bottom: 1px solid #4a5064;
}

.tab > svg:not(.violet):not(.lilac):not(.sand):not(.blue) { color: #85898f; }
.tab.on { border-bottom-color: transparent; background: #2b2c31; color: #f5f9fc; font-weight: 500; }
.tabs .add { padding: 0 8px 2px; border-right: 0; }
.more { flex: 1; justify-content: flex-end; padding-right: 8px; border-bottom: 1px solid #4a5064; }

.secrets { width: 100px; }
.agent-tab { width: 97px; overflow: hidden; }
.ver { margin-left: 2px; padding: 0 5px; border-radius: 4px; background: #1c3a66; color: #a8cdff; font-size: 12px; font-weight: 400; line-height: 16px; }
.progress { width: 106px; border-top: 1px solid #b9662a; }
.t-console { width: 102px; }
.t-web { width: 108px; }
.t-user { width: 132px; }
.t-data { width: 107px; }

.chat-head { height: 28px; flex: none; display: flex; align-items: center; padding: 0 8px; color: #9da2a6; }
.chat-head button { margin-right: 15px; }
.chat-head .chat-name { margin-left: 7px; gap: 4px; font-size: 12px; font-weight: 700; color: #f5f9fc; }
.chat-name svg { color: #85898f; }
.chat-head .gauge { margin: 0 0 0 auto; color: #c2c8cc; }

.log {
  position: relative;
  flex: 1;
  min-height: 0;
  display: flex;
  flex-direction: column;
  justify-content: flex-end;
  overflow: hidden;
  padding: 0 7px 39px;
}

.msg {
  padding: 13px 18px 13px 17px;
  display: flex;
  flex-direction: column;
  gap: 19px;
  border-radius: 8px;
  background: #3b3856;
  line-height: 22px;
}

.thumb {
  position: absolute;
  right: 6px;
  top: 18px;
  width: 1px;
  height: 46px;
  background: #8a78e0;
}

.composer-clip { height: 54px; flex: none; overflow: hidden; padding: 0 8px; }
.composer { border: 1px solid #5a6072; border-radius: 6px; background: #3b3c42; padding: 7px 7px 8px 10px; color: #9da2a6; }
.composer textarea { display: block; width: 100%; height: 22px; line-height: 22px; resize: none; overflow: hidden; }
.composer textarea::placeholder { color: #9da2a6; opacity: 1; }
.composer-row { display: flex; align-items: flex-start; gap: 13px; margin-top: 12px; }
.composer-row > button:not(.send) { margin-top: 7px; }
.composer-row a { margin: 4px 2px 0 auto; font-size: 12px; line-height: 16px; }
.send { width: 24px; height: 24px; border-radius: 4px; background: #5b5b5e; color: #86878b; }

.splitter { flex: 0 0 6px; display: flex; align-items: center; padding: 28px 2px 0; }
.splitter span { width: 2px; height: 24px; background: #4a5064; }

/* Preview */
.preview {
  flex: 1;
  min-height: 0;
  display: flex;
  flex-direction: column;
  margin: 8px 8px 0;
  border: solid #533dcc;
  border-width: 0 3px;
  border-radius: 8px 8px 0 0;
  overflow: hidden;
}

.notice {
  height: 37px;
  flex: none;
  display: flex;
  align-items: center;
  gap: 16px;
  padding: 0 10px 0 7px;
  background: #533dcc;
  color: #d8d6ee;
}

.notice span { color: #b9b4e6; margin-left: -8px; }
.grip { width: 48px; height: 4px; margin: 0 auto 0 34px; border-radius: 2px; background: #c9c9d3; }

.webbar {
  height: 33px;
  flex: none;
  display: flex;
  align-items: center;
  gap: 4px;
  padding: 0 4px;
  border-bottom: 1px solid #4a5064;
  background: #2b2c31;
  font-size: 13px;
  color: #c2c8cc;
}

.nav { width: 24px; height: 24px; color: #85898f; }
.nav.lit { color: #f5f9fc; }

.addr {
  flex: 1;
  min-width: 0;
  height: 24px;
  display: flex;
  align-items: center;
  padding-right: 6px;
  border: 1px solid #5a6072;
  border-radius: 4px;
  background: #3b3c42;
  color: #85898f;
}

.host { height: 22px; line-height: 22px; padding: 0 5px; border-right: 1px solid #5a6072; color: #ffc48a; }
.host b { display: inline-block; padding: 0 2px; line-height: 18px; border-radius: 4px; background: #2f6e22; font-weight: 500; }
.addr input { flex: 1; min-width: 0; padding-left: 8px; color: #fff; }
.sq { width: 24px; height: 24px; border: 1px solid #5a6072; border-radius: 6px; }
.theme { width: 75px; gap: 8px; font-size: 12px; }

/* Site inside the preview */
.site-view {
  flex: 1;
  min-height: 0;
  display: flex;
  overflow: hidden;
  background: #fff;
  color: #0a0a0a;
  font-family: "Open Sans", sans-serif;
}

.cards { flex: 1; min-width: 0; margin-top: -131px; padding: 0 15px 0 16px; display: flex; flex-direction: column; gap: 32px; }
.card { padding: 24px; border: 1px solid #e5e5e5; border-radius: 8px; }
.card h2 { display: flex; align-items: center; gap: 8px; height: 26px; font: 500 22px "Noto Sans", "Open Sans", sans-serif; white-space: nowrap; }
.card p { margin: 22px 0 16px; font-size: 15px; line-height: 24px; color: #737373; white-space: nowrap; }

.cta {
  height: 40px;
  display: flex;
  align-items: center;
  justify-content: center;
  gap: 16px;
  border-radius: 6px;
  background: #101729;
  color: #fafafa;
  font-size: 13px;
  font-weight: 600;
}

.scroll { width: 16px; padding: 3px 2px; background: #fafafa; }
.scroll span { display: block; width: 9px; height: 157px; margin: 140px 2px 0; border-radius: 5px; background: #878787; }

/* Taskbar */
.taskbar {
  height: 38px;
  flex: none;
  display: flex;
  border-top: 1px solid #3c3c3c;
  background: #1c1c1c;
  font: 12px "Open Sans", sans-serif;
  color: #fff;
  overflow: hidden;
}

.weather { position: relative; width: 130px; justify-content: flex-start; padding: 8px 0 0 4px; }
.temp { position: absolute; left: 13px; top: 6px; padding: 0 4px; border-radius: 8px; background: #303030; font-size: 11px; line-height: 16px; }
.apps { display: flex; }
.apps button, .extra button { position: relative; width: 44px; padding-top: 9px; }
.apps .current::before { content: ""; position: absolute; inset: 3px 2px 0; border: 1px solid #3a3a3a; border-radius: 4px 4px 0 0; background: #2a2a2a; }
.apps .current svg { position: relative; }
.kbadge { position: absolute; right: 5px; top: 7px; width: 15px; height: 15px; border-radius: 8px; background: #0d4a3f; font-size: 9px; line-height: 15px; }
.extra { display: flex; margin-left: 2px; padding: 0 2px; border: solid #3c3c3c; border-width: 0 1px; }
.tray { flex: 1; min-width: 0; display: flex; gap: 8px; padding-left: 68px; overflow: hidden; }
.tray button { padding-top: 9px; }
.tray button:first-child { margin-right: 8px; }
.clock { flex: none; display: flex; flex-direction: column; align-items: center; margin-left: 8px; padding-top: 7px; line-height: 16px; white-space: nowrap; }
```
